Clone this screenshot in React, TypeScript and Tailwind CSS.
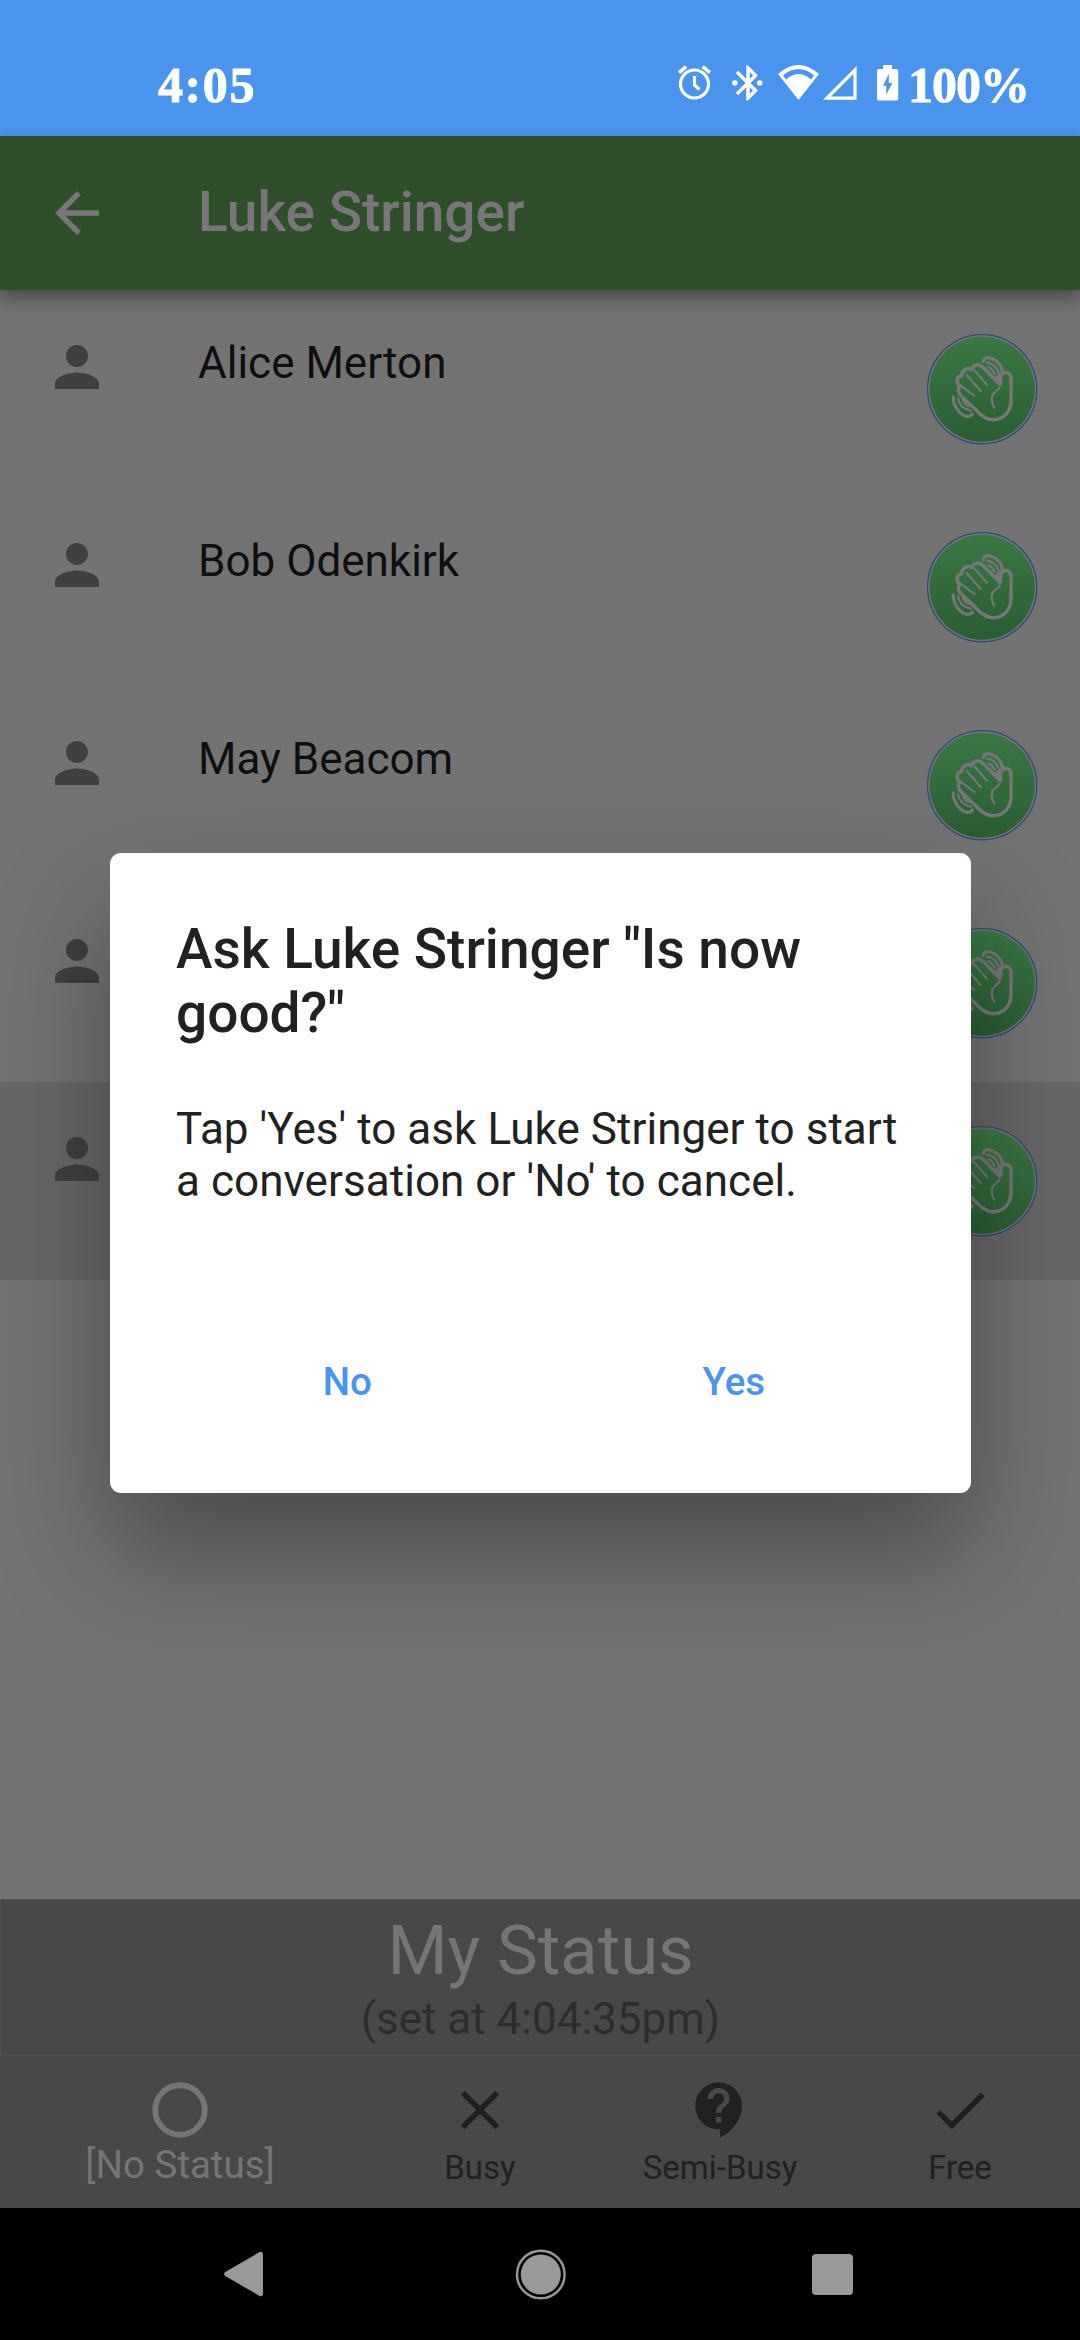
import React from "react";

const contacts = ["Alice Merton", "Bob Odenkirk", "May Beacom", "", ""];

function StatusBar() {
  return (
    <div className="flex h-[136px] shrink-0 items-start bg-[#4a94ed] text-white">
      <span className="ml-[158px] mt-[57px] w-[110px] font-['Liberation_Serif'] text-[50px] font-bold leading-[56px] tracking-[1.600px] [-webkit-text-stroke:0.900px_white]">
        4:05
      </span>
      <div className="mt-[62px] ml-[408px] flex h-[42px] items-start">
        <svg className="h-[42px] w-[38px]" viewBox="676 62 38 42" fill="none" stroke="currentColor">
          <circle cx="694.5" cy="84" r="14" strokeWidth="3.200" />
          <path d="M694.500 76v9l5 4.500" strokeWidth="3.200" />
          <path d="M679 72.600l7.200-6M702.600 66.600l7.400 6" strokeWidth="3.600" />
        </svg>
        <svg className="ml-[13px] h-[42px] w-[42px]" viewBox="0 0 24 24" fill="currentColor">
          <path d="M17.710 7.710L12 2h-1v7.590L6.410 5 5 6.410 10.590 12 5 17.590 6.410 19 11 14.410V22h1l5.710-5.710-4.300-4.290 4.300-4.290zM13 5.830l1.880 1.880L13 9.590V5.830zm1.880 10.460L13 18.170v-3.760l1.880 1.880z" />
          <circle cx="4.500" cy="12" r="1.600" />
          <circle cx="18.700" cy="12" r="1.600" />
        </svg>
        <svg className="ml-[8px] h-[42px] w-[43px]" viewBox="777 62 43 42" fill="currentColor" fillRule="evenodd">
          <path d="M778 74Q798.500 56 819 74L798.500 100ZM783 75.400Q798.500 62.600 814 75.400L811 79.400Q798.500 68.400 786 79.400Z" />
        </svg>
        <svg className="ml-[2px] h-[42px] w-[36px]" viewBox="822 62 36 42" fill="currentColor" fillRule="evenodd">
          <path d="M823 99.800H856.600V66ZM831 96.400H853.400V74Z" />
        </svg>
        <svg className="ml-[18px] h-[42px] w-[24px]" viewBox="876 62 24 42" fill="currentColor" fillRule="evenodd">
          <path d="M883 65h9v4h4.500q1.700 0 1.700 1.700v28q0 1.700-1.700 1.700h-17.800q-1.700 0-1.700-1.700v-28q0-1.700 1.700-1.700h4.300zM888.800 74L883 85.700h3.200v9L892.300 83h-3.500z" />
        </svg>
      </div>
      <span className="ml-[8px] mt-[57px] font-['Liberation_Serif'] text-[50px] font-bold leading-[56px] tracking-[-1px] [-webkit-text-stroke:0.900px_white]">
        100%
      </span>
    </div>
  );
}

function AppBar() {
  return (
    <div className="relative z-10 flex h-[154px] shrink-0 items-center bg-[#2f4f2a] text-[#777] shadow-[0_8px_16px_rgba(0,0,0,0.36)]">
      <svg className="ml-[44px] h-[66px] w-[66px]" viewBox="0 0 24 24" fill="currentColor">
        <path d="M20 11H7.830l5.590-5.590L12 4l-8 8 8 8 1.410-1.410L7.830 13H20v-2z" />
      </svg>
      <h1 className="mb-[3px] ml-[88px] text-[55px] font-medium leading-[64px]">Luke Stringer</h1>
    </div>
  );
}

function WaveButton() {
  return (
    <svg className="h-[112px] w-[112px]" viewBox="77 68 336 336" fill="none">
      <defs>
        <linearGradient id="waveFill" x1="0" y1="0" x2="0" y2="1">
          <stop offset="0" stopColor="#3a7845" />
          <stop offset="1" stopColor="#2b5d33" />
        </linearGradient>
      </defs>
      <circle cx="245.500" cy="236.500" r="163.500" stroke="#2c4a7c" strokeWidth="4.500" />
      <circle cx="245.500" cy="236.500" r="159.500" stroke="#737373" strokeWidth="4" />
      <circle cx="245.500" cy="236.500" r="157.500" fill="url(#waveFill)" />
      <g stroke="#777777" strokeLinecap="round" strokeLinejoin="round">
        <path
          strokeWidth="10.500"
          d="M301 220V201C301 181 332 181 332 203V272C332 304 309 328 279 328C259 328 246 318 236 308L183 257C170 243 173 232 180 229C165 218 168 197 184 196C184 178 204 170 213 178C220 161 238 160 248 171L298 222"
        />
        <path strokeWidth="6.500" d="M222 180L260 223M199 194L241 242M180 225L222 257M298 232L276 254Q270 275 282 292" />
        <path strokeWidth="9.500" d="M249 154C250 138 268 139 285 150Q306 166 306 186M159 260C157 284 180 318 202 318Q214 318 216 311" />
        <path strokeWidth="6.500" d="M260 157Q286 160 295 188M264 171Q276 176 283 190M173 264Q178 294 212 301M187 267Q192 282 205 287" />
        <path fill="#777777" stroke="none" d="M283 200L300 186V222Z" />
      </g>
    </svg>
  );
}

function ContactRow({ name, selected }: { name: string; selected: boolean }) {
  return (
    <li className={selected ? "flex h-[198px] items-start bg-[#676767]" : "flex h-[198px] items-start"}>
      <svg className="ml-[44px] mt-[44px] h-[66px] w-[66px] text-[#404040]" viewBox="0 0 24 24" fill="currentColor">
        <path d="M12 12c2.210 0 4-1.790 4-4s-1.790-4-4-4-4 1.790-4 4 1.790 4 4 4zm0 2c-2.670 0-8 1.340-8 4v2h16v-2c0-2.660-5.330-4-8-4z" />
      </svg>
      <span className="ml-[88px] mt-[47px] grow text-[44px] leading-[52px] text-[#0f0f0f]">{name}</span>
      <span className="mr-[42px] mt-[43px]">
        <WaveButton />
      </span>
    </li>
  );
}

function StatusPanel() {
  return (
    <div className="flex h-[157px] shrink-0 flex-col items-center border-b border-l border-t border-[#505050] bg-[#484848]">
      <div className="mt-[11px] text-[68.750px] leading-[80px] text-[#757575]">My Status</div>
      <div className="mt-[2px] text-[44px] leading-[52px] text-[#2d2d2d]">(set at 4:04:35pm)</div>
    </div>
  );
}

function StatusTabs() {
  return (
    <div className="grid h-[152px] shrink-0 grid-cols-[360px_240px_240px_240px] bg-[#484848] text-[33px] leading-[38px] text-[#212121]">
      <div className="flex flex-col items-center pt-[21px] text-[#757575]">
        <svg className="h-[66px] w-[66px]" viewBox="0 0 24 24" fill="none" stroke="currentColor" strokeWidth="2.100">
          <circle cx="12" cy="12" r="9" />
        </svg>
        <span className="-mt-[1px] text-[38.500px] leading-[45px]">[No Status]</span>
      </div>
      <div className="flex flex-col items-center pt-[21px]">
        <svg className="h-[66px] w-[66px]" viewBox="0 0 24 24" fill="currentColor">
          <path d="M19 6.410L17.590 5 12 10.590 6.410 5 5 6.410 10.590 12 5 17.590 6.410 19 12 13.410 17.590 19 19 17.590 13.410 12z" />
        </svg>
        <span className="mt-[6px]">Busy</span>
      </div>
      <div className="flex flex-col items-center pt-[21px]">
        <svg className="h-[66px] w-[66px]" viewBox="0 0 24 24" fill="currentColor">
          <path d="M11.500 2C6.810 2 3 5.810 3 10.500S6.810 19 11.500 19h.5v3c4.860-2.340 8-7 8-11.500C20 5.810 16.190 2 11.500 2zm1 14.500h-2v-2h2v2zm0-3.500h-2c0-3.250 3-3 3-5 0-1.100-.9-2-2-2s-2 .9-2 2h-2c0-2.210 1.790-4 4-4s4 1.790 4 4c0 2.500-3 2.750-3 5z" />
        </svg>
        <span className="mt-[6px]">Semi-Busy</span>
      </div>
      <div className="flex flex-col items-center pt-[21px]">
        <svg className="h-[66px] w-[66px]" viewBox="0 0 24 24" fill="currentColor">
          <path d="M9 16.200L4.800 12l-1.400 1.400L9 19 21 7l-1.400-1.400L9 16.200z" />
        </svg>
        <span className="mt-[6px]">Free</span>
      </div>
    </div>
  );
}

function SystemNav() {
  return (
    <div className="flex h-[132px] shrink-0 items-center bg-black text-[#999]">
      <svg className="ml-[222px] h-[48px] w-[44px]" viewBox="222 2250.500 44 48" fill="currentColor">
        <path d="M225.200 2272.500L259.500 2252.600Q263 2251.500 263 2255V2294Q263 2297.500 259.500 2296.400L225.200 2276.500Q223 2274.500 225.200 2272.500Z" />
      </svg>
      <svg className="ml-[249px] h-[52px] w-[52px]" viewBox="0 0 52 52">
        <circle cx="25.800" cy="26.500" r="23.800" fill="none" stroke="currentColor" strokeWidth="2.400" />
        <circle cx="25.800" cy="26.500" r="20" fill="currentColor" />
      </svg>
      <div className="ml-[245px] mt-[1px] h-[41px] w-[41px] rounded-[4px] bg-[#999]" />
    </div>
  );
}

function AskDialog() {
  return (
    <div
      role="dialog"
      className="absolute left-[110px] top-[853px] z-20 flex h-[640px] w-[861px] flex-col rounded-[11px] bg-white px-[66px] pt-[64px] text-[#212121] shadow-[0_58px_112px_rgba(0,0,0,0.34)]"
    >
      <h2 className="text-[55px] font-medium leading-[64px]">
        Ask Luke Stringer "Is now
        <br />
        good?"
      </h2>
      <p className="mt-[58px] text-[44px] leading-[52px] tracking-[0.050px]">
        Tap 'Yes' to ask Luke Stringer to start
        <br />a conversation or 'No' to cancel.
      </p>
      <div className="mt-[152px] -mx-[22px] grid grid-cols-2 text-center text-[38.500px] font-medium leading-[46px] text-[#4a94ed]">
        <button>No</button>
        <button>Yes</button>
      </div>
    </div>
  );
}

export default function App() {
  return (
    <div className="relative flex h-[2340px] w-[1080px] flex-col overflow-hidden bg-[#737373] font-['Roboto',sans-serif]">
      <StatusBar />
      <AppBar />
      <ul className="grow">
        {contacts.map((name, i) => (
          <ContactRow key={i} name={name} selected={i === 4} />
        ))}
      </ul>
      <StatusPanel />
      <StatusTabs />
      <SystemNav />
      <AskDialog />
    </div>
  );
}
